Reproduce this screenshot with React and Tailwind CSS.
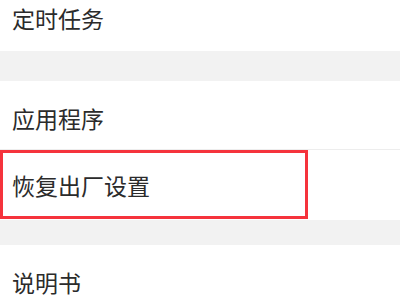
export default function App() {
  const font = { fontFamily: '"Noto Sans CJK SC", "Noto Sans", sans-serif' };
  return (
    <div className="w-[400px] h-[300px] overflow-hidden bg-white text-[#2b2b2b]" style={font}>
      <div className="h-[51px] flex items-start pl-3 pt-[3px]">
        <span className="text-[23px] leading-[30px]">定时任务</span>
      </div>
      <div className="h-[30px] bg-[#f2f2f2]" />
      <div className="h-[68px] flex items-center pl-3 pt-[6px]">
        <span className="text-[23px] leading-[30px]">应用程序</span>
      </div>
      <div className="h-px bg-[#ededed]" />
      <div className="relative h-[70px] flex items-center pl-3">
        <span className="text-[23px] leading-[30px]">恢复出厂设置</span>
        <div className="absolute left-0 top-0 w-[308px] h-[69px] border-[3px] border-[#f5333c]" />
      </div>
      <div className="h-[25px] bg-[#f2f2f2]" />
      <div className="h-[60px] flex items-start pl-3 pt-[22px]">
        <span className="text-[23px] leading-[30px]">说明书</span>
      </div>
    </div>
  );
}
